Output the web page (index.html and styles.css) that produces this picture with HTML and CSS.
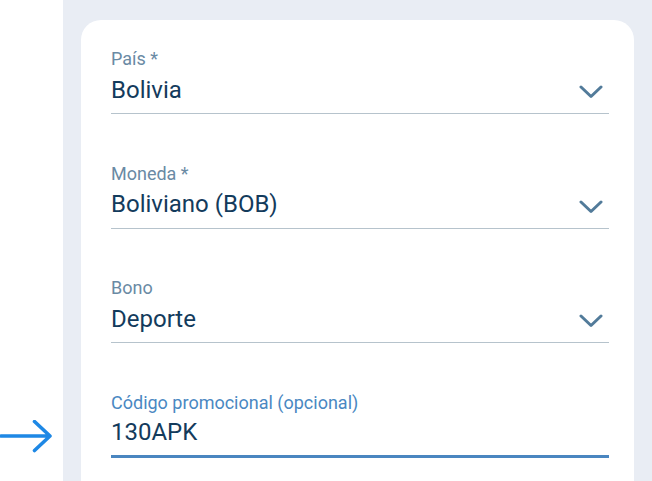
FILE: index.html
```html
<!DOCTYPE html>
<html lang="es">
<head>
<meta charset="utf-8">
<link rel="stylesheet" href="styles.css">
</head>
<body>
<div class="page">
  <div class="gutter">
    <svg class="pointer" width="54" height="34" viewBox="0 0 54 34" aria-hidden="true">
      <path d="M1 16 H49.5 M34.5 1.5 L50 16 L34.5 30.5" fill="none" stroke="#1e88e5" stroke-width="3.6" stroke-linecap="round" stroke-linejoin="round"/>
    </svg>
  </div>
  <div class="panel">
    <div class="card">
      <div class="field">
        <div class="label">País *</div>
        <div class="control">
          <span class="value">Bolivia</span>
          <svg class="chevron" width="24" height="14" viewBox="0 0 24 14"><path d="M2 2 L12 11.5 L22 2" fill="none" stroke="#527b9a" stroke-width="3" stroke-linecap="round" stroke-linejoin="round"/></svg>
        </div>
      </div>
      <div class="field">
        <div class="label">Moneda *</div>
        <div class="control">
          <span class="value">Boliviano (BOB)</span>
          <svg class="chevron" width="24" height="14" viewBox="0 0 24 14"><path d="M2 2 L12 11.5 L22 2" fill="none" stroke="#527b9a" stroke-width="3" stroke-linecap="round" stroke-linejoin="round"/></svg>
        </div>
      </div>
      <div class="field">
        <div class="label">Bono</div>
        <div class="control">
          <span class="value">Deporte</span>
          <svg class="chevron" width="24" height="14" viewBox="0 0 24 14"><path d="M2 2 L12 11.5 L22 2" fill="none" stroke="#527b9a" stroke-width="3" stroke-linecap="round" stroke-linejoin="round"/></svg>
        </div>
      </div>
      <div class="field focused">
        <div class="label">Código promocional (opcional)</div>
        <div class="control">
          <span class="value">130APK</span>
        </div>
      </div>
    </div>
  </div>
</div>
</body>
</html>
```
FILE: styles.css
```css
html, body {
  margin: 0;
  padding: 0;
  background: #ffffff;
  font-family: Roboto, "Noto Sans", sans-serif;
}
.page {
  display: flex;
  width: 652px;
  height: 481px;
  overflow: hidden;
  position: relative;
}
.gutter {
  width: 63px;
  flex: none;
  background: #ffffff;
}
.pointer {
  position: absolute;
  left: 0;
  top: 420px;
}
.panel {
  flex: 1;
  background: #e9edf4;
  padding: 20px 18px 0 18px;
}
.card {
  background: #ffffff;
  border-radius: 20px 20px 0 0;
  height: 100%;
  padding: 28px 25px 0 30px;
  box-sizing: border-box;
  display: flex;
  flex-direction: column;
  gap: 48.5px;
}
.label {
  font-size: 18px;
  line-height: 22px;
  color: #6a8aa4;
}
.control {
  display: flex;
  align-items: center;
  justify-content: space-between;
  height: 44px;
  padding-bottom: 4px;
  box-sizing: border-box;
  border-bottom: 1px solid #b6c3cc;
}
.value {
  font-size: 24px;
  line-height: 28px;
  color: #133b5c;
}
.chevron {
  margin-right: 6px;
  margin-top: 5px;
}
.focused .label {
  color: #4a88c2;
}
.focused .control {
  border-bottom: 3px solid #4a86c0;
}
```
